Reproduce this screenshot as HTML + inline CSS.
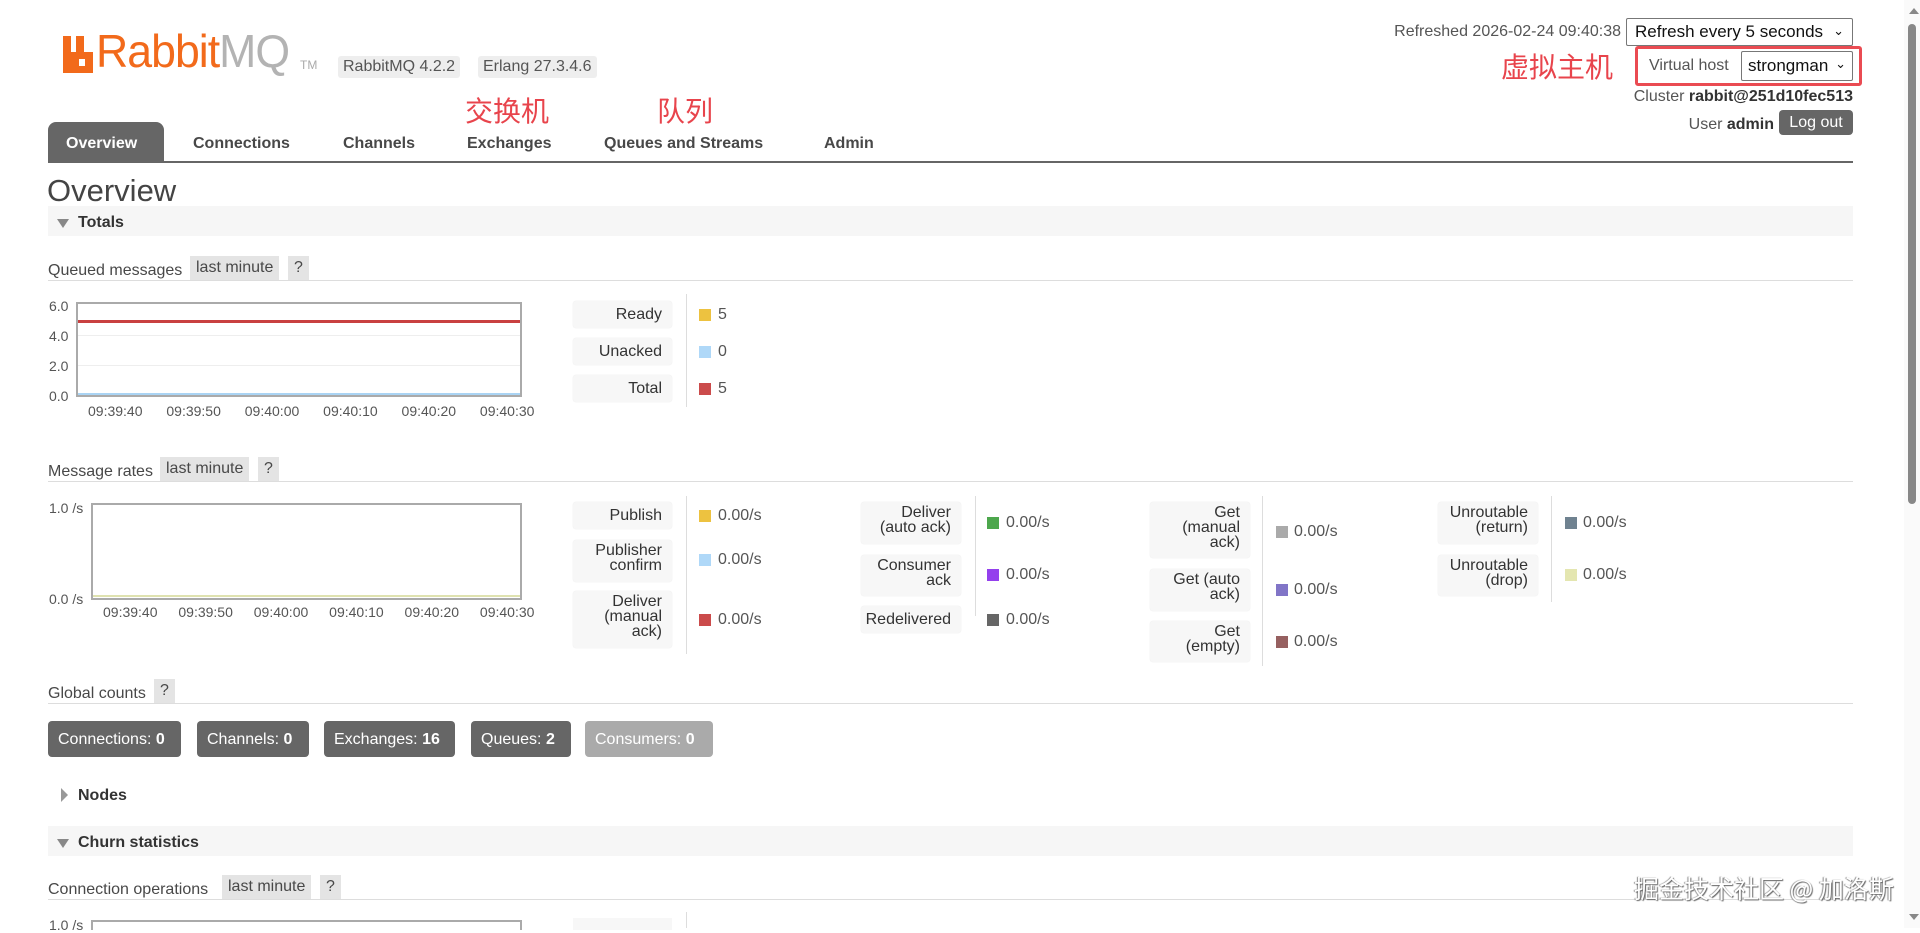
<!DOCTYPE html>
<html><head><meta charset="utf-8"><style>
*{box-sizing:border-box;margin:0;padding:0}
body{width:1920px;height:928px;overflow:hidden;background:#fff;font-family:"Liberation Sans","Noto Sans CJK SC",sans-serif;color:#484848;font-size:16px;position:relative}
.a{position:absolute;white-space:nowrap}
.badge{position:absolute;background:#eee;border-radius:3px;color:#555;font-size:16px;padding:2px 5px;line-height:18px}
.red{color:#e8444c;font-size:28px;font-family:"Noto Sans CJK SC",sans-serif;position:absolute;line-height:32px}
.tab{position:absolute;top:135px;font-weight:bold;font-size:16px;color:#484848}
.bar{position:absolute;left:48px;width:1805px;background:#f6f6f6;height:30px}
.bar b{position:absolute;left:30px;top:8px;font-size:16px;color:#333}
.tri{position:absolute;left:9px;top:13px;width:0;height:0;border-left:6px solid transparent;border-right:6px solid transparent;border-top:9px solid #888}
.sec{position:absolute;left:48px;width:1805px;border-bottom:1px solid #ddd;height:24px}
.sec span.t{position:absolute;left:0;top:5px}
.lm{position:absolute;top:-1px;background:#e4e4e4;padding:2px 6px;line-height:20px}
.lg{position:absolute;background:#f7f7f7;border-radius:3px;text-align:right;padding:3px 10px 0 4px;font-size:16px;line-height:15px;color:#333;box-shadow:0 0 1px #ddd}
.vl{position:absolute;width:1px;background:#ddd}
.sq{position:absolute;width:12px;height:12px}
.val{position:absolute;font-size:16px;color:#555}
.btn{position:absolute;top:721px;height:36px;background:#666;color:#fff;border-radius:4px;line-height:38px;padding:0 10px;font-size:16px}
.ax{position:absolute;font-size:14px;color:#555}
</style></head><body>

<!-- logo -->
<svg class="a" style="left:63px;top:36px" width="30" height="37" viewBox="0 0 30 37"><path d="M0 0h8v16h5V0h8v16h9v21H0z" fill="#f26a1b"/><rect x="16" y="23" width="6" height="7" fill="#fff"/></svg>
<div class="a" style="left:96px;top:25px;font-size:46px;line-height:52px;color:#f26a1b;letter-spacing:-1px;transform:scaleX(0.97);transform-origin:left">Rabbit<span style="color:#b3b3b3">MQ</span></div>
<div class="a" style="left:300px;top:58px;font-size:12px;color:#aaa">TM</div>
<div class="badge" style="left:338px;top:56px">RabbitMQ 4.2.2</div>
<div class="badge" style="left:478px;top:56px">Erlang 27.3.4.6</div>

<div class="red" style="left:465px;top:94px">交换机</div>
<div class="red" style="left:657px;top:94px">队列</div>

<!-- tabs -->
<div class="a" style="left:48px;top:122px;width:116px;height:40px;background:#666;border-radius:8px 8px 0 0"></div>
<div class="tab" style="left:66px;color:#fff">Overview</div>
<div class="tab" style="left:193px">Connections</div>
<div class="tab" style="left:343px">Channels</div>
<div class="tab" style="left:467px">Exchanges</div>
<div class="tab" style="left:604px">Queues and Streams</div>
<div class="tab" style="left:824px">Admin</div>
<div class="a" style="left:48px;top:161px;width:1805px;height:2px;background:#666"></div>

<!-- right header -->
<div class="a" style="right:299px;top:23px;font-size:16px;color:#555">Refreshed 2026-02-24 09:40:38</div>
<div class="a" style="left:1626px;top:18px;width:227px;height:28px;border:1px solid #777;border-radius:2px;font-size:17px;color:#111;padding:3px 8px;line-height:20px">Refresh every 5 seconds<span style="position:absolute;right:8px;top:2px;font-size:13px">&#8964;</span></div>
<div class="red" style="left:1501px;top:50px">虚拟主机</div>
<div class="a" style="left:1635px;top:46px;width:227px;height:40px;border:3px solid #ea4b52;border-radius:3px"></div>
<div class="a" style="left:1649px;top:57px;color:#555">Virtual host</div>
<div class="a" style="left:1741px;top:51px;width:112px;height:30px;border:1px solid #777;border-radius:2px;font-size:17px;color:#111;padding:4px 6px;line-height:20px">strongman<span style="position:absolute;right:6px;top:2px;font-size:13px">&#8964;</span></div>
<div class="a" style="right:67px;top:88px;color:#555">Cluster <b style="color:#333">rabbit@251d10fec513</b></div>
<div class="a" style="right:146px;top:116px;color:#555">User <b style="color:#333">admin</b></div>
<div class="a" style="left:1779px;top:110px;width:74px;height:25px;background:#666;color:#fff;border-radius:4px;text-align:center;line-height:26px">Log out</div>

<div class="a" style="left:47px;top:173px;font-size:31px;color:#444">Overview</div>

<div class="bar" style="top:206px"><span class="tri"></span><b>Totals</b></div>

<!-- Queued messages -->
<div class="sec" style="top:257px"><span class="t">Queued messages</span><span class="lm" style="left:142px">last minute</span><span class="lm" style="left:240px">?</span></div>
<div class="ax" style="left:49px;top:298px">6.0</div>
<div class="ax" style="left:49px;top:328px">4.0</div>
<div class="ax" style="left:49px;top:358px">2.0</div>
<div class="ax" style="left:49px;top:388px">0.0</div>
<div class="a" style="left:76px;top:302px;width:446px;height:95px;border:2px solid #aaa;background:#fff"></div>
<div class="a" style="left:78px;top:335px;width:442px;height:1px;background:#eee"></div>
<div class="a" style="left:78px;top:365px;width:442px;height:1px;background:#eee"></div>
<div class="a" style="left:78px;top:320px;width:442px;height:3px;background:#c94040"></div>
<div class="a" style="left:78px;top:393px;width:442px;height:2px;background:#aad4f4"></div>
<div class="ax" style="left:88px;top:403px;word-spacing:20px">09:39:40 09:39:50 09:40:00 09:40:10 09:40:20 09:40:30</div>

<div class="lg" style="left:573px;top:301px;width:99px;height:27px;padding-top:6px">Ready</div>
<div class="lg" style="left:573px;top:338px;width:99px;height:27px;padding-top:6px">Unacked</div>
<div class="lg" style="left:573px;top:375px;width:99px;height:27px;padding-top:6px">Total</div>
<div class="vl" style="left:686px;top:294px;height:113px"></div>
<div class="sq" style="left:699px;top:309px;background:#edc240"></div><div class="val" style="left:718px;top:306px">5</div>
<div class="sq" style="left:699px;top:346px;background:#afd8f8"></div><div class="val" style="left:718px;top:343px">0</div>
<div class="sq" style="left:699px;top:383px;background:#cb4b4b"></div><div class="val" style="left:718px;top:380px">5</div>

<!-- Message rates -->
<div class="sec" style="top:458px"><span class="t">Message rates</span><span class="lm" style="left:112px">last minute</span><span class="lm" style="left:210px">?</span></div>
<div class="ax" style="left:49px;top:500px">1.0 /s</div>
<div class="ax" style="left:49px;top:591px">0.0 /s</div>
<div class="a" style="left:91px;top:503px;width:431px;height:97px;border:2px solid #aaa;background:#fff"></div>
<div class="a" style="left:93px;top:595px;width:427px;height:2px;background:#dfe2b0"></div>
<div class="ax" style="left:103px;top:604px;word-spacing:17px">09:39:40 09:39:50 09:40:00 09:40:10 09:40:20 09:40:30</div>

<div class="lg" style="left:573px;top:502px;width:99px;height:27px;padding-top:6px">Publish</div>
<div class="lg" style="left:573px;top:540px;width:99px;height:42px">Publisher<br>confirm</div>
<div class="lg" style="left:573px;top:591px;width:99px;height:57px">Deliver<br>(manual<br>ack)</div>
<div class="vl" style="left:686px;top:496px;height:158px"></div>
<div class="sq" style="left:699px;top:510px;background:#edc240"></div><div class="val" style="left:718px;top:507px">0.00/s</div>
<div class="sq" style="left:699px;top:554px;background:#afd8f8"></div><div class="val" style="left:718px;top:551px">0.00/s</div>
<div class="sq" style="left:699px;top:614px;background:#cb4b4b"></div><div class="val" style="left:718px;top:611px">0.00/s</div>

<div class="lg" style="left:861px;top:502px;width:100px;height:42px">Deliver<br>(auto ack)</div>
<div class="lg" style="left:861px;top:555px;width:100px;height:41px">Consumer<br>ack</div>
<div class="lg" style="left:861px;top:606px;width:100px;height:27px;padding-top:6px">Redelivered</div>
<div class="vl" style="left:975px;top:496px;height:120px"></div>
<div class="sq" style="left:987px;top:517px;background:#4da74d"></div><div class="val" style="left:1006px;top:514px">0.00/s</div>
<div class="sq" style="left:987px;top:569px;background:#9440ed"></div><div class="val" style="left:1006px;top:566px">0.00/s</div>
<div class="sq" style="left:987px;top:614px;background:#666"></div><div class="val" style="left:1006px;top:611px">0.00/s</div>

<div class="lg" style="left:1150px;top:502px;width:100px;height:56px">Get<br>(manual<br>ack)</div>
<div class="lg" style="left:1150px;top:569px;width:100px;height:42px">Get (auto<br>ack)</div>
<div class="lg" style="left:1150px;top:621px;width:100px;height:41px">Get<br>(empty)</div>
<div class="vl" style="left:1262px;top:496px;height:170px"></div>
<div class="sq" style="left:1276px;top:526px;background:#aaa"></div><div class="val" style="left:1294px;top:523px">0.00/s</div>
<div class="sq" style="left:1276px;top:584px;background:#8175c7"></div><div class="val" style="left:1294px;top:581px">0.00/s</div>
<div class="sq" style="left:1276px;top:636px;background:#966060"></div><div class="val" style="left:1294px;top:633px">0.00/s</div>

<div class="lg" style="left:1438px;top:502px;width:100px;height:42px">Unroutable<br>(return)</div>
<div class="lg" style="left:1438px;top:555px;width:100px;height:41px">Unroutable<br>(drop)</div>
<div class="vl" style="left:1551px;top:496px;height:106px"></div>
<div class="sq" style="left:1565px;top:517px;background:#6f8290"></div><div class="val" style="left:1583px;top:514px">0.00/s</div>
<div class="sq" style="left:1565px;top:569px;background:#e4e6b0"></div><div class="val" style="left:1583px;top:566px">0.00/s</div>

<!-- Global counts -->
<div class="sec" style="top:680px"><span class="t">Global counts</span><span class="lm" style="left:106px">?</span></div>
<div class="btn" style="left:48px;width:133px">Connections: <b>0</b></div>
<div class="btn" style="left:197px;width:112px">Channels: <b>0</b></div>
<div class="btn" style="left:324px;width:131px">Exchanges: <b>16</b></div>
<div class="btn" style="left:471px;width:100px">Queues: <b>2</b></div>
<div class="btn" style="left:585px;width:128px;background:#aaa">Consumers: <b>0</b></div>

<div class="a" style="left:61px;top:788px;width:0;height:0;border-top:7px solid transparent;border-bottom:7px solid transparent;border-left:7px solid #999"></div>
<div class="a" style="left:78px;top:787px;font-weight:bold;color:#333">Nodes</div>

<div class="bar" style="top:826px"><span class="tri"></span><b>Churn statistics</b></div>

<div class="sec" style="top:876px"><span class="t">Connection operations</span><span class="lm" style="left:174px">last minute</span><span class="lm" style="left:272px">?</span></div>
<div class="ax" style="left:49px;top:917px">1.0 /s</div>
<div class="a" style="left:91px;top:920px;width:431px;height:10px;border-top:2px solid #aaa;border-left:2px solid #aaa;border-right:2px solid #aaa"></div>
<div class="a" style="left:573px;top:918px;width:99px;height:12px;background:#f7f7f7"></div>
<div class="vl" style="left:686px;top:912px;height:16px"></div>

<!-- watermark -->
<div class="a" style="left:1634px;top:870px;font-size:25px;color:#fff;font-family:'Noto Sans CJK SC',sans-serif;text-shadow:1px 1px 1px #666,-1px 0 1px #888">掘金技术社区 @ 加洛斯</div>

<!-- scrollbar -->
<div class="a" style="left:1904px;top:0;width:16px;height:928px;background:#fafafa"></div>
<div class="a" style="left:1909px;top:8px;width:0;height:0;border-left:5px solid transparent;border-right:5px solid transparent;border-bottom:6px solid #888"></div>
<div class="a" style="left:1908px;top:24px;width:8px;height:480px;background:#888;border-radius:4px"></div>
<div class="a" style="left:1909px;top:914px;width:0;height:0;border-left:5px solid transparent;border-right:5px solid transparent;border-top:6px solid #888"></div>
</body></html>
